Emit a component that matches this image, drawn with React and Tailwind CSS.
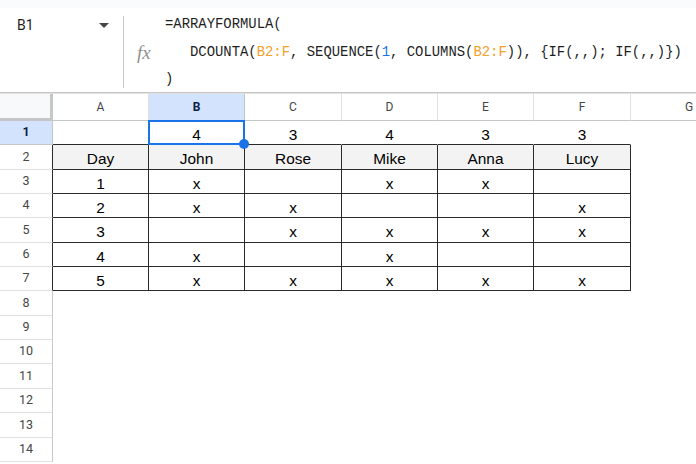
import React from 'react';

const colWidths = [96, 96, 97, 96, 96, 97];
const colLetters = ['A', 'B', 'C', 'D', 'E', 'F'];
const rowHeights = [24, 25, 24, 24, 25, 24, 24, 25, 24, 24, 25, 24, 25, 24];

const data = [
  ['', '4', '3', '4', '3', '3'],
  ['Day', 'John', 'Rose', 'Mike', 'Anna', 'Lucy'],
  ['1', 'x', '', 'x', 'x', ''],
  ['2', 'x', 'x', '', '', 'x'],
  ['3', '', 'x', 'x', 'x', 'x'],
  ['4', 'x', '', 'x', '', ''],
  ['5', 'x', 'x', 'x', 'x', 'x'],
];

const FormulaBar = () => (
  <div className="flex h-[85px] border-b border-[#c7c7c7] bg-white">
    <div className="flex w-[123px] shrink-0 items-start pl-[17px] pt-[7px]">
      <span className="text-[14px] leading-[20px] text-[#1f1f1f]" style={{ fontFamily: 'Roboto, sans-serif' }}>
        B1
      </span>
      <div className="ml-auto mr-[14px] mt-[8px] h-0 w-0 border-l-[5px] border-r-[5px] border-t-[5px] border-l-transparent border-r-transparent border-t-[#444746]" />
    </div>
    <div className="mt-[8px] h-[72px] w-px shrink-0 bg-[#c7c7c7]" />
    <div className="w-[41px] shrink-0 pl-[13px] pt-[34px]">
      <span className="text-[19px] italic leading-[20px] text-[#909090]" style={{ fontFamily: '"Liberation Serif", serif' }}>
        fx
      </span>
    </div>
    <div
      className="shrink-0 whitespace-pre pt-[3px] text-[13.9px] leading-[27.7px] text-[#1f1f1f]"
      style={{ fontFamily: '"Liberation Mono", monospace' }}
    >
      <div>=ARRAYFORMULA(</div>
      <div>
        {'   DCOUNTA('}
        <span className="text-[#f5a02a]">B2:F</span>
        {', SEQUENCE('}
        <span className="text-[#1a73e8]">1</span>
        {', COLUMNS('}
        <span className="text-[#f5a02a]">B2:F</span>
        {')), {IF(,,); IF(,,)})'}
      </div>
      <div>)</div>
    </div>
  </div>
);

const HeaderRow = () => (
  <div className="flex h-[28px] border-t border-[#e1e1e1]" style={{ fontFamily: 'Roboto, Arial, sans-serif' }}>
    <div className="w-[53px] shrink-0 border-b-[3px] border-r-[3px] border-[#c4c7c5] bg-[#f8f9fa]" />
    {colLetters.map((l, i) => (
      <div
        key={l}
        style={{ width: colWidths[i] }}
        className={`flex shrink-0 items-center justify-center border-b border-r border-b-[#c4c7c5] text-[12px] ${
          l === 'B' ? 'border-r-[#c4c7c5] bg-[#d3e3fd] font-bold text-[#0b1f44]' : 'border-r-[#e1e1e1] bg-white text-[#444746]'
        }`}
      >
        {l}
      </div>
    ))}
    <div className="flex w-[116px] shrink-0 items-center justify-center border-b border-[#c4c7c5] text-[12px] text-[#444746]">
      G
    </div>
  </div>
);

const Row = ({ r }) => {
  const values = data[r - 1] || ['', '', '', '', '', ''];
  const inTable = r >= 2 && r <= 7;
  let headerCls = 'bg-white text-[#444746] border-b-[#e1e1e1] border-r-[#c4c7c5]';
  if (r === 1) headerCls = 'bg-[#d3e3fd] font-bold text-[#0b1f44] border-b-[#c4c7c5] border-r-[#c4c7c5]';
  if (inTable) headerCls = 'bg-white text-[#444746] border-b-[#e1e1e1] border-r-[#2a2a2a]';
  return (
    <div className="flex" style={{ height: rowHeights[r - 1] }}>
      <div
        className={`flex w-[53px] shrink-0 items-center justify-center border-b border-r text-[12.5px] ${headerCls}`}
        style={{ fontFamily: 'Roboto, Arial, sans-serif' }}
      >
        {r}
      </div>
      {colWidths.map((w, c) => {
        const bottomDark = r <= 7;
        return (
          <div
            key={c}
            style={{ width: w }}
            className={`relative flex shrink-0 items-center justify-center border-b border-r pt-[4px] text-[15.4px] leading-[18px] text-black ${
              inTable ? 'border-r-[#2a2a2a]' : 'border-r-transparent'
            } ${bottomDark ? 'border-b-[#2a2a2a]' : 'border-b-transparent'} ${r === 2 ? 'bg-[#f3f3f3]' : 'bg-white'}`}
          >
            {values[c]}
            {r === 1 && c === 1 && (
              <>
                <div className="absolute -left-px -top-px bottom-[-1px] right-[-1px] border-2 border-[#1a73e8]" />
                <div className="absolute -bottom-[5px] -right-[5px] z-10 h-[10px] w-[10px] rounded-full bg-[#1a73e8]" />
              </>
            )}
          </div>
        );
      })}
      <div className="w-[116px] shrink-0" />
    </div>
  );
};

export default function App() {
  return (
    <div
      className="h-[464px] w-[696px] overflow-hidden bg-white"
      style={{ fontFamily: '"Liberation Sans", Arial, sans-serif' }}
    >
      <div className="h-[8px] bg-[#f9fbfd]" />
      <FormulaBar />
      <HeaderRow />
      {rowHeights.map((_, i) => (
        <Row key={i} r={i + 1} />
      ))}
    </div>
  );
}
